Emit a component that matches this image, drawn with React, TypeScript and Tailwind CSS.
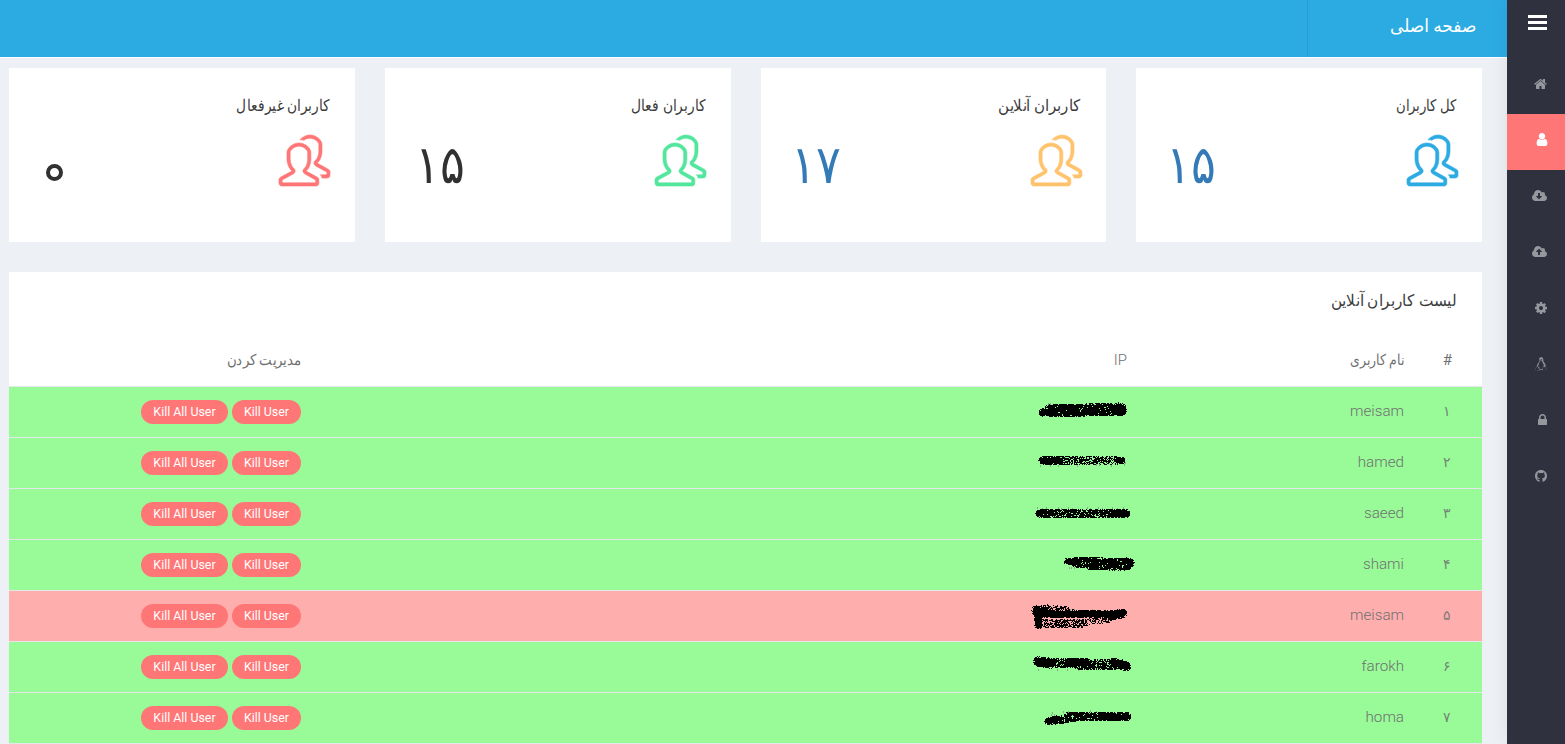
import React from "react";
import { SlPeople } from "react-icons/sl";
import { FaGithub, FaLinux } from "react-icons/fa";

const CLOUD =
  "m640 224q0 159-112.5 271.5t-271.5 112.5h-1088q-185 0-316.5-131.5t-131.500-316.500q0-130 70-240t188-165q-2-30-2-43 0-212 150-362t362-150q156 0 285.500 87t188.500 231q71-62 166-62 106 0 181 75t75 181q0 76-41 138 130 31 213.500 135.500t83.500 238.500z";

const PATHS = {
  home: "M1472 992v480q0 26-19 45t-45 19h-384v-384h-256v384h-384q-26 0-45-19t-19-45v-480q0-1 .5-3t.5-3l575-474 575 474q1 2 1 6zm223-69l-62 74q-8 9-21 11h-3q-13 0-21-7l-692-577-692 577q-12 8-24 7-13-2-21-11l-62-74q-8-10-7-23.500t11-21.500l719-599q32-26 76-26t76 26l244 204v-195q0-14 9-23t23-9h192q14 0 23 9t9 23v408l219 182q10 8 11 21.500t-7 23.500z",
  user: "M1536 1399q0 109-62.5 187t-150.5 78h-854q-88 0-150.5-78t-62.5-187q0-85 8.5-160.5t31.5-152 58.5-131 94-89 134.5-34.5q131 128 313 128t313-128q76 0 134.5 34.5t94 89 58.5 131 31.5 152 8.5 160.5zm-256-887q0 159-112.5 271.5t-271.5 112.5-271.5-112.5-112.5-271.5 112.5-271.5 271.5-112.5 271.5 112.5 112.5 271.5z",
  down: "M1216 928q0-14-9-23t-23-9h-224v-352q0-13-9.5-22.5t-22.5-9.5h-192q-13 0-22.5 9.5t-9.5 22.5v352h-224q-13 0-22.5 9.5t-9.5 22.5q0 14 9 23l352 352q9 9 23 9t23-9l351-351q10-12 10-24z" + CLOUD,
  up: "M1216 864q0-14-9-23l-352-352q-9-9-23-9t-23 9l-351 351q-10 12-10 24 0 14 9 23t23 9h224v352q0 13 9.5 22.5t22.5 9.5h192q13 0 22.5-9.5t9.5-22.5v-352h224q13 0 22.5-9.5t9.5-22.5z" + CLOUD.replace("m640 224", "m640 288"),
  cog: "M1152 896q0-106-75-181t-181-75-181 75-75 181 75 181 181 75 181-75 75-181zm512-109v222q0 12-8 23t-20 13l-185 28q-19 54-39 91 35 50 107 138 10 12 10 25t-9 23q-27 37-99 108t-94 71q-12 0-26-9l-138-108q-44 23-91 38-16 136-29 186-7 28-36 28h-222q-14 0-24.5-8.5t-11.5-21.5l-28-184q-49-16-90-37l-141 107q-10 9-25 9-14 0-25-11-126-114-165-168-7-10-7-23 0-12 8-23 15-21 51-66.5t54-70.5q-27-50-41-99l-183-27q-13-2-21-12.5t-8-23.5v-222q0-12 8-23t19-13l186-28q14-46 39-92-40-57-107-138-10-12-10-24 0-10 9-23 26-36 98.5-107.5t94.5-71.5q13 0 26 10l138 107q44-23 91-38 16-136 29-186 7-28 36-28h222q14 0 24.5 8.5t11.5 21.5l28 184q49 16 90 37l142-107q9-9 24-9 13 0 25 10 129 119 165 170 7 8 7 22 0 12-8 23-15 21-51 66.5t-54 70.5q26 50 41 98l183 28q13 2 21 12.5t8 23.5z",
  lock: "M640 768h512v-192q0-106-75-181t-181-75-181 75-75 181v192zm832 96v576q0 40-28 68t-68 28h-960q-40 0-68-28t-28-68v-576q0-40 28-68t68-28h32v-192q0-184 132-316t316-132 316 132 132 316v192h32q40 0 68 28t28 68z",
};

function Glyph({ d, box, className }: { d: string; box: string; className: string }) {
  return (
    <svg viewBox={box} className={className} fill="currentColor">
      <path d={d} />
    </svg>
  );
}

const NAV = [
  { key: "home", icon: <Glyph d={PATHS.home} box="64 0 1664 1792" className="h-3.5 w-[13px]" /> },
  { key: "user", icon: <Glyph d={PATHS.user} box="256 0 1280 1792" className="-mr-px mb-px h-[15px] w-[12px]" />, active: true },
  { key: "down", icon: <Glyph d={PATHS.down} box="-64 0 1920 1792" className="h-3.5 w-[15px]" /> },
  { key: "up", icon: <Glyph d={PATHS.up} box="-64 0 1920 1792" className="h-3.5 w-[15px]" /> },
  { key: "cog", icon: <Glyph d={PATHS.cog} box="128 0 1536 1792" className="h-3.5 w-3" /> },
  { key: "linux", icon: <FaLinux className="h-3.5 w-3" /> },
  { key: "lock", icon: <Glyph d={PATHS.lock} box="320 0 1152 1792" className="h-3.5 w-[9px]" /> },
  { key: "github", icon: <FaGithub className="h-3.5 w-3" /> },
];

const CARDS = [
  { title: "کل کاربران", fit: "scale-x-[0.83]", value: "۱۵", icon: "text-[#2cabe3]", num: "text-[#337ab7]" },
  { title: "کاربران آنلاین", fit: "scale-x-[0.94]", value: "۱۷", icon: "text-[#ffc36d]", num: "text-[#337ab7]" },
  { title: "کاربران فعال", fit: "scale-x-[0.865]", value: "۱۵", icon: "text-[#53e69d]", num: "text-[#313131]" },
  { title: "کاربران غیرفعال", fit: "scale-x-[0.86]", value: "۰", icon: "text-[#ff7676]", num: "text-[#313131]" },
];

// Each stroke: x1, y1, x2, y2, radius, density
type Stroke = [number, number, number, number, number, number];

const ROWS: { n: string; name: string; red?: boolean; strokes: Stroke[]; specks: [number, number][] }[] = [
  { n: "۱", name: "meisam", strokes: [[22, 26, 32, 25, 4, 1], [30, 24, 100, 23, 6.5, 0.95], [50, 24, 100, 22, 5, 0.95], [98, 21, 101, 22, 5, 1]], specks: [[28, 17], [30, 17], [105, 19], [105, 23]] },
  { n: "۲", name: "hamed", strokes: [[22, 23, 40, 23, 4, 1], [40, 23, 60, 23, 4, 0.84], [60, 23, 98, 23, 4, 0.66], [97, 23, 101, 23, 3.8, 1]], specks: [[20, 28], [30, 28], [38, 28], [57, 28], [76, 27], [79, 27], [91, 28], [105, 25], [104, 27]] },
  { n: "۳", name: "saeed", strokes: [[19, 25, 30, 25, 4, 0.95], [28, 25, 95, 25, 4.3, 0.86], [94, 25, 105, 25, 4.6, 1]], specks: [[17, 19], [22, 20], [26, 19], [38, 19], [41, 20], [48, 19], [52, 20], [67, 19], [70, 20], [78, 19], [82, 20], [92, 19], [97, 20], [103, 19]] },
  { n: "۴", name: "shami", strokes: [[47, 22, 58, 22, 3.8, 1], [56, 23, 108, 24, 5.5, 0.92], [70, 26, 106, 27, 4.5, 0.93], [106, 22, 110, 23, 4, 1]], specks: [[49, 28], [51, 28], [54, 28]] },
  { n: "۵", name: "meisam", red: true, strokes: [[16, 20, 24, 22, 5, 1], [18, 21, 18, 34, 4.5, 1], [24, 18, 45, 20, 4.3, 0.65], [24, 23, 98, 24, 4.4, 1], [22, 33, 60, 33, 4.8, 0.66], [56, 33, 88, 29, 3.4, 0.5], [90, 25, 102, 23, 4.9, 1]], specks: [[50, 19], [54, 19], [72, 19], [80, 20], [103, 19]] },
  { n: "۶", name: "farokh", strokes: [[18, 20, 30, 22, 5.2, 1], [28, 21, 55, 22, 5, 0.82], [48, 21, 66, 21, 4.7, 1], [60, 23, 100, 23, 5.6, 0.8], [93, 21, 106, 25, 4.8, 1]], specks: [[18, 28], [37, 28], [47, 28], [58, 28], [74, 20]] },
  { n: "۷", name: "homa", strokes: [[28, 29, 36, 27, 4, 1], [36, 28, 54, 25, 4.2, 0.84], [48, 24, 100, 24, 4.6, 0.93], [80, 24, 106, 24, 4.5, 0.98]], specks: [[31, 22], [32, 20], [34, 22], [43, 19], [48, 19], [70, 18], [76, 19]] },
];

function inkPath(strokes: Stroke[], seed: number) {
  let s = seed * 7919 + 17;
  const rnd = () => {
    s = (s * 1103515245 + 12345) % 2147483648;
    return s / 2147483648;
  };
  let d = "";
  for (let y = 10; y < 42; y++) {
    for (let x = 8; x < 120; x++) {
      let p = 0;
      for (const [x1, y1, x2, y2, r, dens] of strokes) {
        const len = (x2 - x1) ** 2 + (y2 - y1) ** 2;
        const t = Math.max(0, Math.min(1, ((x - x1) * (x2 - x1) + (y - y1) * (y2 - y1)) / len));
        const dist = Math.hypot(x - x1 - t * (x2 - x1), y - y1 - t * (y2 - y1));
        if (dist <= r) p = Math.max(p, dist > r - 1.3 ? dens * 0.8 : dens);
      }
      if (rnd() < p) d += `M${x} ${y}h1v1h-1z`;
    }
  }
  return d;
}

function Scribble({ strokes, specks, seed }: { strokes: Stroke[]; specks: [number, number][]; seed: number }) {
  return (
    <svg viewBox="0 0 130 50" className="-mr-[23px] h-[50px] w-[130px] shrink-0" shapeRendering="crispEdges">
      <path d={specks.map(([x, y]) => `M${x} ${y}h1v2h-1z`).join("")} fill="#8aa88a" />
      <path d={inkPath(strokes, seed)} fill="#000" />
    </svg>
  );
}

const GRID = "grid grid-cols-[48px_277px_826px_1fr] pr-[30px] items-center";

export default function App() {
  return (
    <div dir="rtl" className="flex h-[744px] w-full overflow-hidden bg-[#edf1f5] font-['Roboto','DejaVu_Sans',sans-serif] font-light">
      <aside className="z-10 flex w-[58px] shrink-0 flex-col bg-[#2f323e] shadow-[1px_0_20px_rgba(0,0,0,0.08)]">
        <div className="flex h-[58px] flex-col gap-[3px] pt-[15px] pr-[18px]">
          <div className="h-[3px] w-[19px] bg-white" />
          <div className="h-[3px] w-[19px] bg-white" />
          <div className="h-[3px] w-[19px] bg-white" />
        </div>
        {NAV.map((item) => (
          <div
            key={item.key}
            className={
              item.active
                ? "flex h-14 items-center bg-[#ff7676] pr-[18px] pb-1 text-white"
                : "flex h-14 items-center pr-[18px] pb-1 text-[#97989e]"
            }
          >
            {item.icon}
          </div>
        ))}
      </aside>

      <div className="flex min-w-0 flex-1 flex-col">
        <header className="flex h-[58px] shrink-0 border-b border-white bg-[#2cabe3]">
          <div className="flex w-[200px] items-center border-l border-black/8 pr-[31px] pb-1.5 text-[18px] font-normal text-white">
            <span className="origin-right scale-x-[0.945] whitespace-nowrap">صفحه اصلی</span>
          </div>
        </header>

        <main className="flex flex-1 flex-col pt-2.5 pr-[25px] pl-[9px]">
          <section className="grid grid-cols-4 gap-[30px]">
            {CARDS.map((c) => (
              <div key={c.title} className="h-[174px] bg-white px-[25px] pt-[26px]">
                <h3 className="h-6 text-[16px] leading-6 whitespace-nowrap text-[#3c3c3c]">
                  <span className={`inline-block origin-right ${c.fit}`}>{c.title}</span>
                </h3>
                <div className="mt-[17px] flex items-center justify-between">
                  <SlPeople className={`-mr-[0.6px] size-[51px] overflow-visible stroke-current stroke-[12] ${c.icon}`} />
                  {c.value === "۰" ? (
                    <span aria-label={c.value} className="mt-[24px] ml-[12px] size-[17px] rounded-full border-4 border-[#313131]" />
                  ) : (
                    <span className={`pt-[9px] pl-[5px] text-[48px] leading-[42px] ${c.num}`}>
                      <span className="inline-block origin-left scale-x-[0.96] scale-y-[1.1]">{c.value}</span>
                    </span>
                  )}
                </div>
              </div>
            ))}
          </section>

          <section className="mt-[30px] flex-1 bg-white">
            <h3 className="h-[62px] pt-[17px] pr-[25px] text-[16px] leading-6 whitespace-nowrap text-[#3c3c3c]">
              <span className="inline-block origin-right scale-x-[0.955]">لیست کاربران آنلاین</span>
            </h3>
            <div className={`${GRID} h-[53px] border-b border-[#e4e7ea] text-[15px] text-[#707070]`}>
              <span className="font-normal">#</span>
              <span className="origin-right scale-x-[0.83]">نام کاربری</span>
              <span>IP</span>
              <span className="origin-right scale-x-[0.89]">مدیریت کردن</span>
            </div>
            {ROWS.map((r, i) => (
              <div
                key={r.n}
                className={`${GRID} h-[51px] border-b border-[#e4e7ea] text-[15.2px] text-[#707070] ${r.red ? "bg-[#ffaeae]" : "bg-[#98fb98]"}`}
              >
                <span className="pr-px pb-0.5 text-[14px] opacity-85">{r.n}</span>
                <span className="pb-0.5">{r.name}</span>
                <div className="flex h-[50px] -translate-y-px">
                  <Scribble strokes={r.strokes} specks={r.specks} seed={i + 1} />
                </div>
                <div className="flex gap-1 text-[12.4px] font-normal text-white">
                  <button className="h-6 w-[69px] rounded-full bg-[#ff7676] whitespace-nowrap">Kill User</button>
                  <button className="h-6 w-[87px] rounded-full bg-[#ff7676] whitespace-nowrap">Kill All User</button>
                </div>
              </div>
            ))}
          </section>
        </main>
      </div>
    </div>
  );
}
